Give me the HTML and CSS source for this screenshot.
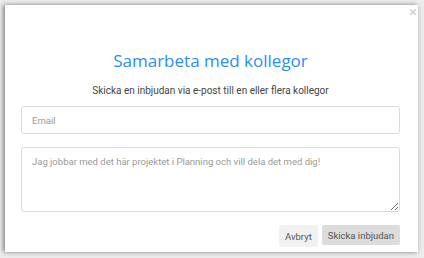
FILE: index.html
```html
<!DOCTYPE html>
<html lang="sv">

<head>
  <meta charset="UTF-8">
  <title>Samarbeta med kollegor</title>
  <link rel="stylesheet" href="styles.css">
</head>

<body>
  <div class="modal">
    <span class="close">&times;</span>
    <h1 class="title">Samarbeta med kollegor</h1>
    <p class="subtitle">Skicka en inbjudan via e-post till en eller flera kollegor</p>
    <input class="field" type="text" placeholder="Email">
    <textarea class="field message" placeholder="Jag jobbar med det här projektet i Planning och vill dela det med dig!"></textarea>
    <div class="actions">
      <button class="btn cancel">Avbryt</button>
      <button class="btn send">Skicka inbjudan</button>
    </div>
  </div>
</body>

</html>
```

FILE: styles.css
```css
html,
body {
  margin: 0;
  padding: 0;
}

body {
  background: #ececec;
  font-family: Roboto, "Liberation Sans", sans-serif;
  width: 424px;
  height: 258px;
  overflow: hidden;
}

.modal {
  position: relative;
  box-sizing: border-box;
  width: 413px;
  height: 247px;
  margin: 5px 0 0 5px;
  padding: 0 18px 0 16px;
  background: #fff;
  box-shadow: -2px 0 4px rgba(0, 0, 0, .35), 0 0 6px rgba(0, 0, 0, .15);
  display: flex;
  flex-direction: column;
}

.close {
  position: absolute;
  top: 0;
  right: 1px;
  font-size: 15px;
  line-height: 14px;
  color: #cfcfcf;
}

.title {
  margin: 44px 0 0;
  font-family: "Open Sans", sans-serif;
  font-weight: 400;
  font-size: 17px;
  line-height: 23px;
  color: #2b8ff0;
  text-align: center;
}

.subtitle {
  margin: 12px 0 0;
  font-size: 10px;
  line-height: 14px;
  color: #444;
  text-align: center;
}

.field {
  box-sizing: border-box;
  width: 100%;
  margin: 8px 0 0;
  height: 28px;
  padding: 0 10px;
  border: 1.5px solid #d6dae2;
  border-radius: 3px;
  font-family: Roboto, sans-serif;
  font-size: 9.5px;
  color: #333;
  outline: none;
}

.field::placeholder {
  color: #999;
}

.message {
  height: 65px;
  margin-top: 13px;
  padding: 8px 10px;
  resize: vertical;
}

.actions {
  display: flex;
  justify-content: flex-end;
  gap: 4px;
  margin-top: 13px;
}

.btn {
  border: none;
  border-radius: 2px;
  font-family: Roboto, sans-serif;
  font-size: 9.5px;
  color: #555;
  padding: 0 6px;
}

.cancel {
  background: #f1f1f1;
  height: 22px;
}

.send {
  background: #dcdcdc;
  height: 20px;
  padding: 0 6px;
}
```
